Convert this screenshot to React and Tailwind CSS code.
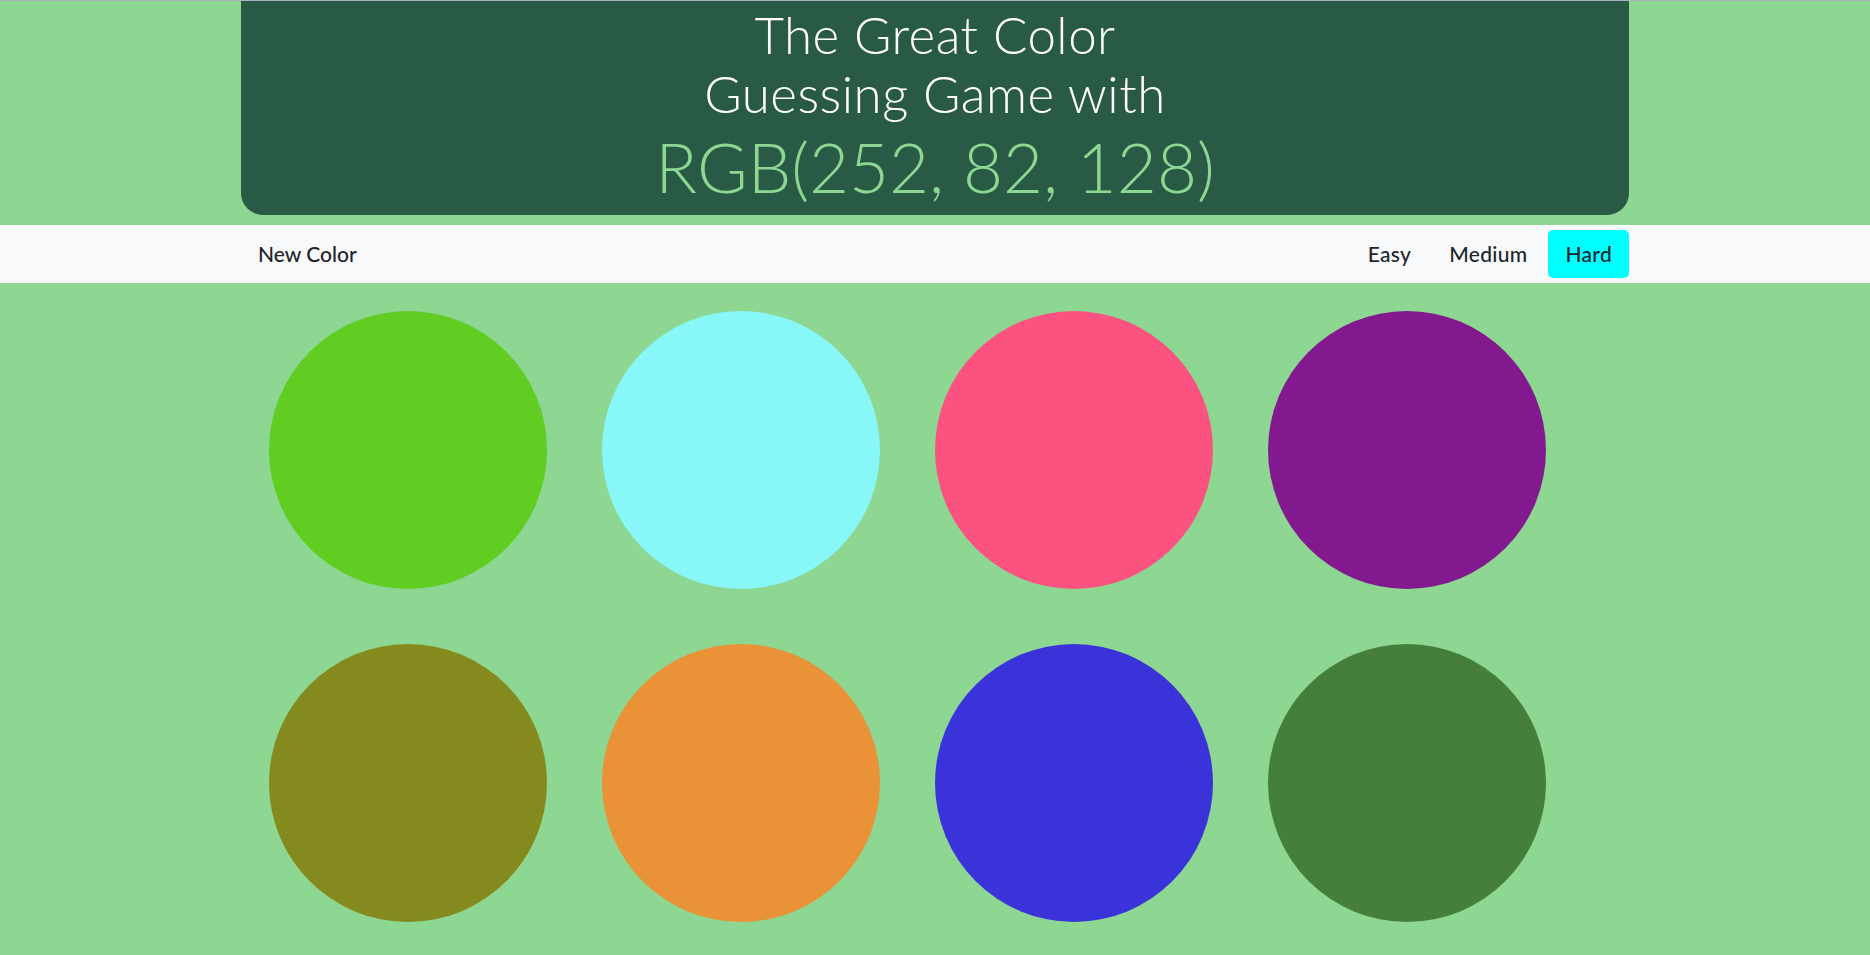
const colors = [
  "#61cc22",
  "#87f7f7",
  "#fc5280",
  "#83198f",
  "#858a1f",
  "#e99238",
  "#3b33da",
  "#457f3b",
];

const levels = ["Easy", "Medium", "Hard"];

export default function App() {
  const level = "Hard";

  return (
    <div className="min-h-screen bg-[#8dd793] font-['Lato',sans-serif]">
      <div className="h-px bg-[#a7b3bf]" />

      <div className="mx-auto w-[1388px] h-[214px] rounded-b-[22px] bg-[#285a45] text-center pt-[4px]">
        <h1 className="text-[51px] leading-[59px] font-light tracking-[0.5px] text-white">
          The Great Color
          <br />
          Guessing Game with
        </h1>
        <div className="mt-[4px] text-[69px] leading-[80px] font-light text-[#8dd793]">
          RGB(252, 82, 128)
        </div>
      </div>

      <nav className="mt-[10px] h-[58px] bg-[#f8f9fa]">
        <div className="mx-auto w-[1388px] h-full flex items-center justify-between">
          <button className="ml-[17px] text-[21px] font-medium text-[#212529]">
            New Color
          </button>
          <div className="flex items-center gap-[4px]">
            {levels.map((l) => (
              <button
                key={l}
                className={
                  l === level
                    ? "h-[48px] px-[17px] rounded-[5px] bg-[#00ffff] text-[21px] font-medium tracking-[0.3px] text-[#212529]"
                    : "h-[48px] px-[17px] rounded-[5px] text-[21px] font-medium tracking-[0.3px] text-[#212529]"
                }
              >
                {l}
              </button>
            ))}
          </div>
        </div>
      </nav>

      <div className="mx-auto w-[1388px] grid grid-cols-[repeat(4,333px)]">
        {colors.map((c) => (
          <div key={c} className="h-[333px] flex items-center justify-center">
            <div
              className="w-[278px] h-[278px] rounded-full"
              style={{ backgroundColor: c }}
            />
          </div>
        ))}
      </div>
    </div>
  );
}
